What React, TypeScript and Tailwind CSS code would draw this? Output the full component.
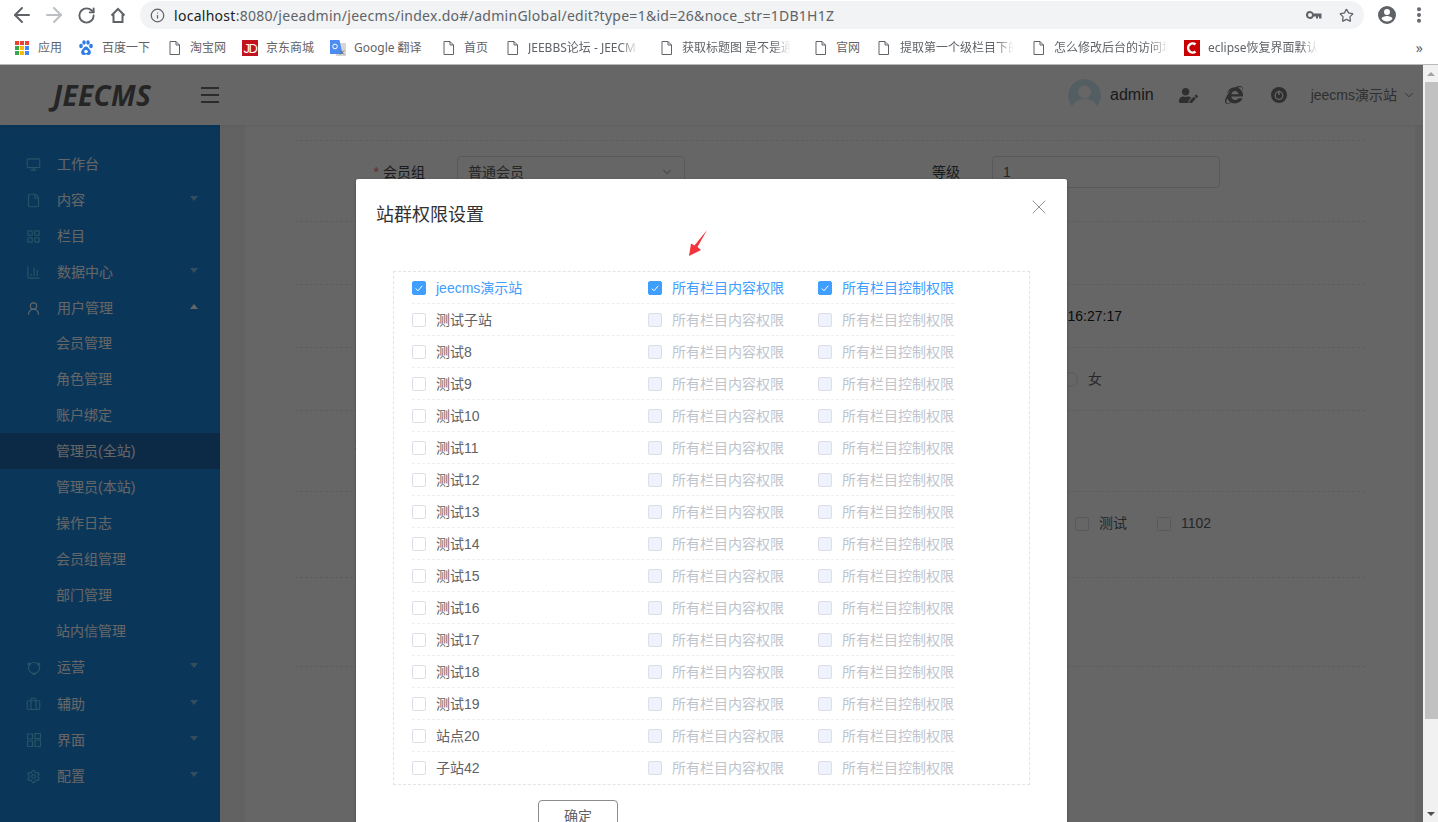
import React from "react";
import { ArrowLeft, ArrowRight, RotateCw, Info, Star, EllipsisVertical, ChevronDown, X, Monitor, File, LayoutGrid, ChartColumn, UserRound, Settings, Briefcase } from "lucide-react";
import { FaInternetExplorer, FaUserEdit } from "react-icons/fa";

const PageIcon = () => (
  <svg width="11" height="14" viewBox="0 0 11 14" fill="none" stroke="#5f6368" strokeWidth="1">
    <path d="M1 .5h6l3.5 3.5v9.500h-9.500z" fill="#fff" />
    <path d="M7 .5v3.500h3.500" />
  </svg>
);

const AppsIcon = () => (
  <svg width="14" height="14" viewBox="0 0 14 14">
    {[
      [0, 0, "#ea4335"], [5, 0, "#ea4335"], [10, 0, "#ea4335"],
      [0, 5, "#34a853"], [5, 5, "#fbbc05"], [10, 5, "#4285f4"],
      [0, 10, "#34a853"], [5, 10, "#fbbc05"], [10, 10, "#4285f4"],
    ].map(([x, y, c], i) => <rect key={i} x={x as number} y={y as number} width="4" height="4" fill={c as string} />)}
  </svg>
);

const BaiduIcon = () => (
  <svg width="14" height="16" viewBox="0 0 14 16" fill="#2e7ae6">
    <ellipse cx="2" cy="6" rx="1.800" ry="2.200" />
    <ellipse cx="5" cy="2.500" rx="1.700" ry="2.300" />
    <ellipse cx="9" cy="2.500" rx="1.700" ry="2.300" />
    <ellipse cx="12" cy="6" rx="1.800" ry="2.200" />
    <path d="M7 6.500c-2 0-2.500 2-4 3.500-1.500 1.500-1 5 1.500 5 1 0 1.500-.5 2.500-.5s1.500.5 2.500.5c2.500 0 3-3.500 1.500-5-1.500-1.500-2-3.500-4-3.500z" />
    <circle cx="7" cy="11.500" r="1.800" fill="#fff" />
  </svg>
);

const JdIcon = () => (
  <div className="flex h-4 w-4 items-center justify-center bg-[#c3121f] font-['Liberation_Sans',sans-serif] text-[13px] leading-none tracking-[-1.5px] text-white">JD</div>
);

const TranslateIcon = () => (
  <svg width="16" height="17" viewBox="0 0 16 17">
    <rect x="6" y="3" width="10" height="13" fill="#d5d5d5" />
    <path d="M0 0h9.500l3 14h-12.500z" fill="#4d8cf5" />
    <circle cx="5" cy="6.500" r="2.300" fill="none" stroke="#fff" strokeWidth="1" />
    <path d="M10 10.500l4 4M14 10.500l-4 4" stroke="#666" strokeWidth="1" />
  </svg>
);

const CIcon = () => (
  <svg width="16" height="16" viewBox="0 0 16 16">
    <rect width="16" height="16" fill="#c80000" />
    <path d="M11.500 4.500a4.500 4.500 0 1 0 0 7" fill="none" stroke="#fff" strokeWidth="2.500" />
  </svg>
);

const bookmarks: { icon: React.ReactNode; label: string; w: string; gap: string; fade?: boolean; tw?: string }[] = [
  { icon: <AppsIcon />, label: "应用", w: "w-[64px]", gap: "gap-[9px]" },
  { icon: <BaiduIcon />, label: "百度一下", w: "w-[90px]", gap: "gap-[9px]" },
  { icon: <PageIcon />, label: "淘宝网", w: "w-[73px]", gap: "gap-[10px]" },
  { icon: <JdIcon />, label: "京东商城", w: "w-[88px]", gap: "gap-[8px]" },
  { icon: <TranslateIcon />, label: "Google 翻译", w: "w-[113px]", gap: "gap-[8px]" },
  { icon: <PageIcon />, label: "首页", w: "w-[64px]", gap: "gap-[10px]" },
  { icon: <PageIcon />, label: "JEEBBS论坛 - JEECM", w: "w-[154px]", gap: "gap-[10px]", fade: true, tw: "w-[116px]" },
  { icon: <PageIcon />, label: "获取标题图 是不是通", w: "w-[154px]", gap: "gap-[10px]", fade: true, tw: "w-[114px]" },
  { icon: <PageIcon />, label: "官网", w: "w-[63px]", gap: "gap-[10px]" },
  { icon: <PageIcon />, label: "提取第一个级栏目下的", w: "w-[155px]", gap: "gap-[11px]", fade: true, tw: "w-[120px]" },
  { icon: <PageIcon />, label: "怎么修改后台的访问地", w: "w-[151px]", gap: "gap-[10px]", fade: true, tw: "w-[120px]" },
  { icon: <CIcon />, label: "eclipse恢复界面默认", w: "w-[150px]", gap: "gap-[8px]", fade: true, tw: "w-[116px]" },
];

const Slot = ({ children }: { children: React.ReactNode }) => (
  <span className="flex w-[32px] justify-center">{children}</span>
);

const Chrome = () => (
  <div className="h-[65px] shrink-0 border-b border-[#b9b9b9] bg-white font-['Noto_Sans','Noto_Sans_CJK_SC',sans-serif] text-[#5f6368]">
    <div className="flex h-[32px] items-start">
      <div className="flex h-[30px] w-[140px] items-center pl-[6px]">
        <Slot><ArrowLeft size={24} strokeWidth={2} className="text-[#5f6368]" /></Slot>
        <Slot><ArrowRight size={24} strokeWidth={2} className="text-[#bcbfc3]" /></Slot>
        <Slot><RotateCw size={19} strokeWidth={2.400} className="text-[#5f6368]" /></Slot>
        <Slot>
          <svg width="16" height="16" viewBox="0 0 16 16" fill="none" stroke="#5f6368" strokeWidth="2">
            <path d="M1.500 8.500L8 2l6.500 6.500M3.500 7.500V15h9V7.500" />
          </svg>
        </Slot>
      </div>
      <div className="mt-px flex h-[28px] w-[1224px] items-center rounded-full bg-[#f1f3f4] pl-[10px] pr-[10px]">
        <Info size={15} strokeWidth={2} className="text-[#5f6368]" />
        <div className="ml-[9px] flex-1 whitespace-nowrap text-[14px] tracking-[0.28px]">
          <span className="text-[#202124]">localhost</span>
          <span className="text-[#5f6368]">:8080/jeeadmin/jeecms/index.do#/adminGlobal/edit?type=1&amp;id=26&amp;noce_str=1DB1H1Z</span>
        </div>
        <svg width="16" height="8" viewBox="0 0 16 8" fill="#5f6368">
          <path fillRule="evenodd" d="M4 0a4 4 0 1 0 3.700 5.500H10V7.500h2V5.500h1V7.500h2.500V2.500H7.700A4 4 0 0 0 4 0zM4 2a2 2 0 1 1 0 4a2 2 0 0 1 0-4z" />
        </svg>
        <Star size={15} strokeWidth={2} className="ml-[17px] text-[#5f6368]" />
      </div>
      <div className="flex h-[30px] flex-1 items-center pl-[14px]">
        <svg width="18" height="18" viewBox="0 0 18 18" fill="#5f6368">
          <path fillRule="evenodd" d="M9 0a9 9 0 1 0 0 18a9 9 0 0 0 0-18zM9 3a3 3 0 1 1 0 6a3 3 0 0 1 0-6zM9 15.500c-2.200 0-4.200-1.100-5.400-2.800c.1-1.800 3.600-2.700 5.400-2.700s5.300.9 5.400 2.700c-1.200 1.700-3.200 2.800-5.400 2.800z" />
        </svg>
        <EllipsisVertical size={20} strokeWidth={2.800} className="ml-[13px] text-[#5f6368]" />
      </div>
    </div>
    <div className="flex h-[32px] items-center pl-[15px] text-[12px]">
      {bookmarks.map((b) => (
        <div key={b.label} className={`flex shrink-0 items-center ${b.w} ${b.gap}`}>
          <span className="flex shrink-0 items-center">{b.icon}</span>
          <span className={`whitespace-nowrap ${b.fade ? `${b.tw} [mask-image:linear-gradient(to_right,black_80%,transparent_95%)]` : ""}`}>{b.label}</span>
        </div>
      ))}
      <span className="ml-auto pr-[15px] text-[14px] leading-none">»</span>
    </div>
  </div>
);

const iconCls = "text-[#5fd4ff]";
const PanelIcon = () => (
  <svg width="14" height="14" viewBox="0 0 14 14" fill="none" stroke="#5fd4ff" strokeWidth="1.200"><path d="M.5 1h5v5h-5zM8 .5h5.500v5H8zM.5 8h5v5.500h-5zM8 7h5.500v6.500H8z" /></svg>
);
const RingIcon = () => (
  <svg width="14" height="14" viewBox="0 0 14 14" fill="none" stroke="#5fd4ff" strokeWidth="1.200"><circle cx="7" cy="7" r="5.500" /><circle cx="2" cy="3" r="1" fill="#5fd4ff" /><circle cx="12" cy="3" r="1" fill="#5fd4ff" /><circle cx="7" cy="13" r="1" fill="#5fd4ff" /></svg>
);

type Nav = { label: string; icon?: React.ReactNode; caret?: "up" | "down"; active?: boolean; sub?: boolean; h?: string };
const nav: Nav[] = [
  { label: "工作台", icon: <Monitor size={15} strokeWidth={1.800} className={iconCls} /> },
  { label: "内容", icon: <File size={15} strokeWidth={1.800} className={iconCls} />, caret: "down" },
  { label: "栏目", icon: <LayoutGrid size={15} strokeWidth={1.800} className={iconCls} /> },
  { label: "数据中心", icon: <ChartColumn size={15} strokeWidth={1.800} className={iconCls} />, caret: "down" },
  { label: "用户管理", icon: <UserRound size={15} strokeWidth={1.800} className="text-white" />, caret: "up" },
  { label: "会员管理", sub: true, h: "h-[35px]" },
  { label: "角色管理", sub: true },
  { label: "账户绑定", sub: true },
  { label: "管理员(全站)", sub: true, active: true },
  { label: "管理员(本站)", sub: true },
  { label: "操作日志", sub: true },
  { label: "会员组管理", sub: true },
  { label: "部门管理", sub: true },
  { label: "站内信管理", sub: true },
  { label: "运营", icon: <RingIcon />, caret: "down", h: "h-[37px]" },
  { label: "辅助", icon: <Briefcase size={15} strokeWidth={1.800} className={iconCls} />, caret: "down" },
  { label: "界面", icon: <PanelIcon />, caret: "down" },
  { label: "配置", icon: <Settings size={15} strokeWidth={1.800} className={iconCls} />, caret: "down" },
];

const Sidebar = () => (
  <div className="w-[220px] shrink-0 bg-[#1b87de] pt-[21px] text-[14px] text-white">
    {nav.map((n) => (
      <div key={n.label} className={`flex items-center ${n.h ?? "h-[36px]"} ${n.active ? "bg-[#1e69af]" : ""} ${n.sub ? "pl-[56px]" : "pl-[26px]"}`}>
        {n.icon && <span className="mr-[16px] flex w-[15px] justify-center">{n.icon}</span>}
        <span>{n.label}</span>
        {n.caret && (
          <span className={`ml-auto mr-[22px] mb-[4px] h-0 w-0 border-x-[4px] border-x-transparent ${n.caret === "down" ? "border-t-[5px] border-t-[#7fc0e8]" : "border-b-[5px] border-b-white"}`} />
        )}
      </div>
    ))}
  </div>
);

const Header = () => (
  <div className="z-10 flex h-[60px] shrink-0 items-center bg-white pl-[53px] shadow-[0_1px_4px_rgba(0,0,0,0.06)]">
    <span className="w-[148px] font-['Open_Sans',sans-serif] text-[28px] font-bold italic leading-none tracking-[0.3px] text-[#5c5c5c]">JEECMS</span>
    <svg width="18" height="16" viewBox="0 0 18 16" stroke="#6b6b6b" strokeWidth="2"><path d="M0 1h18M0 8h18M0 15h18" /></svg>
    <div className="ml-auto flex items-center pr-[7px]">
      <svg width="33" height="33" viewBox="0 0 33 33" className="rounded-full">
        <circle cx="16.500" cy="16.500" r="16.500" fill="#cfeaf8" />
        <circle cx="16.500" cy="13" r="6.500" fill="#fff" />
        <path d="M4 28c2-6 7-8 12.500-8s10.500 2 12.500 8a16.500 16.500 0 0 1-25 0z" fill="#fff" />
      </svg>
      <span className="ml-[9px] text-[16px] text-[#3f3f3f]">admin</span>
      <FaUserEdit size={19} className="ml-[25px] text-[#777]" />
      <FaInternetExplorer size={18} className="ml-[27px] text-[#777]" />
      <svg width="16" height="16" viewBox="0 0 16 16" className="ml-[28px]">
        <circle cx="8" cy="8" r="8" fill="#777" />
        <circle cx="8" cy="8.500" r="3.800" fill="none" stroke="#fff" strokeWidth="1.300" />
        <path d="M8 3.500v4.500" stroke="#fff" strokeWidth="1.500" />
      </svg>
      <span className="ml-[24px] text-[14px] text-[#777]">jeecms演示站</span>
      <ChevronDown size={14} strokeWidth={1.500} className="ml-[5px] text-[#777]" />
    </div>
  </div>
);

const GhostBox = ({ w = "w-[228px]", text, caret }: { w?: string; text: string; caret?: boolean }) => (
  <div className={`flex h-[32px] items-center rounded-[4px] border border-[#dcdfe6] pl-[10px] pr-[10px] text-[14px] text-[#606266] ${w}`}>
    <span>{text}</span>
    {caret && <ChevronDown size={14} className="ml-auto text-[#c0c4cc]" />}
  </div>
);

const Label = ({ children, req }: { children?: React.ReactNode; req?: boolean }) => (
  <div className="mr-[32px] w-[130px] shrink-0 text-right text-[14px] text-[#444]">
    {req && <span className="mr-[4px] text-[#f56c6c]">*</span>}
    {children}
  </div>
);

const GhostCheck = ({ label }: { label: string }) => (
  <div className="ml-px flex w-[81px] shrink-0 items-center gap-[10px] text-[14px] text-[#606266]">
    <span className="h-[14px] w-[14px] rounded-[2px] border border-[#dcdfe6]" />
    <span>{label}</span>
  </div>
);

const rowLine = "border-b border-dashed border-[#e8e8e8]";

const Background = () => (
  <div className="ml-[25px] w-[1170px] bg-white pl-[50px] pt-[15px]">
    <div className="w-[1070px] border-t border-dashed border-[#e8e8e8] text-[#333]">
      <div className={`grid h-[81px] grid-cols-2 items-start pt-[15px] ${rowLine}`}>
        <div className="flex items-center"><Label req>会员组</Label><GhostBox text="普通会员" caret /></div>
        <div className="flex items-center"><Label>等级</Label><GhostBox text="1" /></div>
      </div>
      <div className={`h-[63px] ${rowLine}`} />
      <div className={`grid h-[63px] grid-cols-2 items-center ${rowLine}`}>
        <div />
        <div className="flex items-center"><Label /><span className="text-[14px] text-[#222]">2019-04-16 16:27:17</span></div>
      </div>
      <div className={`grid h-[63px] grid-cols-2 items-center ${rowLine}`}>
        <div />
        <div className="flex items-center">
          <Label />
          <span className="ml-[71px] h-[15px] w-[15px] rounded-full border border-[#dcdfe6]" />
          <span className="ml-[10px] text-[14px] text-[#606266]">女</span>
        </div>
      </div>
      <div className={`h-[81px] pt-[23px] ${rowLine}`}>
        <Label>站点群权限</Label>
      </div>
      <div className={`grid h-[86px] grid-cols-2 items-start pt-[21px] ${rowLine}`}>
        <div />
        <div className="flex items-center"><Label /><GhostCheck label="默认" /><GhostCheck label="测试" /><GhostCheck label="1102" /></div>
      </div>
      <div className={`h-[89px] ${rowLine}`} />
    </div>
  </div>
);

const Box = ({ state }: { state: "checked" | "empty" | "disabled" }) => (
  <span className={`flex h-[14px] w-[14px] shrink-0 items-center justify-center rounded-[2px] border ${state === "checked" ? "border-[#409eff] bg-[#409eff]" : state === "disabled" ? "border-[#dcdfe6] bg-[#edf2fc]" : "border-[#dcdfe6] bg-white"}`}>
    {state === "checked" && (
      <svg width="8" height="7" viewBox="0 0 8 7" fill="none" stroke="#fff" strokeWidth="1"><path d="M.8 3.500l2.200 2.300 4.200-5" /></svg>
    )}
  </span>
);

const sites = ["jeecms演示站", "测试子站", "测试8", "测试9", "测试10", "测试11", "测试12", "测试13", "测试14", "测试15", "测试16", "测试17", "测试18", "测试19", "站点20", "子站42"];

const Modal = () => (
  <div className="relative mt-[114px] h-[800px] w-[711px] shrink-0 rounded-[2px] bg-white shadow-[0_1px_3px_rgba(0,0,0,0.3)]">
    <div className="pl-[20px] pt-[24px] text-[18px] leading-[24px] text-[#303133]">站群权限设置</div>
    <X size={24} strokeWidth={1} className="absolute right-[16px] top-[16px] text-[#909399]" />
    <svg width="20" height="27" viewBox="0 0 20 27" className="absolute left-[332px] top-[51px]">
      <path d="M19 0L9.500 17L13 20L1 26L3 13.500L6.500 15.500z" fill="#f5333a" />
    </svg>
    <div className="ml-[37px] mt-[44px] h-[514px] w-[637px] border border-dashed border-[#e4e4e4] pl-[18px] text-[14px]">
      {sites.map((s, i) => {
        const on = i === 0;
        return (
          <div key={s} className={`flex h-[32px] w-[542px] items-center ${i < 15 ? "border-b border-dashed border-[#ebeef5] pt-px" : ""} ${on ? "text-[#409eff]" : "text-[#606266]"}`}>
            <div className="flex w-[236px] items-center gap-[10px]"><Box state={on ? "checked" : "empty"} /><span>{s}</span></div>
            <div className={`flex w-[170px] items-center gap-[10px] ${on ? "" : "text-[#c0c4cc]"}`}><Box state={on ? "checked" : "disabled"} /><span>所有栏目内容权限</span></div>
            <div className={`flex items-center gap-[10px] ${on ? "" : "text-[#c0c4cc]"}`}><Box state={on ? "checked" : "disabled"} /><span>所有栏目控制权限</span></div>
          </div>
        );
      })}
    </div>
    <button className="ml-[182px] mt-[15px] flex h-[32px] w-[80px] items-center justify-center rounded-[4px] border border-[#8c8c8c] bg-white text-[14px] text-[#606266]">确定</button>
  </div>
);

const Scrollbar = () => (
  <div className="flex w-[15px] shrink-0 flex-col items-end bg-[#f1f1f1]">
    <div className="flex h-[17px] w-full items-center justify-center">
      <span className="h-0 w-0 border-x-[4px] border-b-[4px] border-x-transparent border-b-[#a3a3a3]" />
    </div>
    <div className="h-[637px] w-[13px] bg-[#c1c1c1]" />
    <div className="mt-auto flex h-[17px] w-full items-center justify-center">
      <span className="h-0 w-0 border-x-[4px] border-t-[4px] border-x-transparent border-t-[#505050]" />
    </div>
  </div>
);

export default function App() {
  return (
    <div className="flex h-[822px] w-[1438px] flex-col overflow-hidden bg-white font-['Liberation_Sans','Noto_Sans_CJK_SC',sans-serif]">
      <Chrome />
      <div className="flex min-h-0 flex-1">
        <div className="relative min-w-0 flex-1 overflow-hidden">
          <div className="flex h-full flex-col bg-[#f5f5f5]">
            <Header />
            <div className="flex min-h-0 flex-1">
              <Sidebar />
              <Background />
            </div>
          </div>
          <div className="absolute inset-0 z-20 flex justify-center overflow-hidden bg-black/60">
            <Modal />
          </div>
        </div>
        <Scrollbar />
      </div>
    </div>
  );
}
